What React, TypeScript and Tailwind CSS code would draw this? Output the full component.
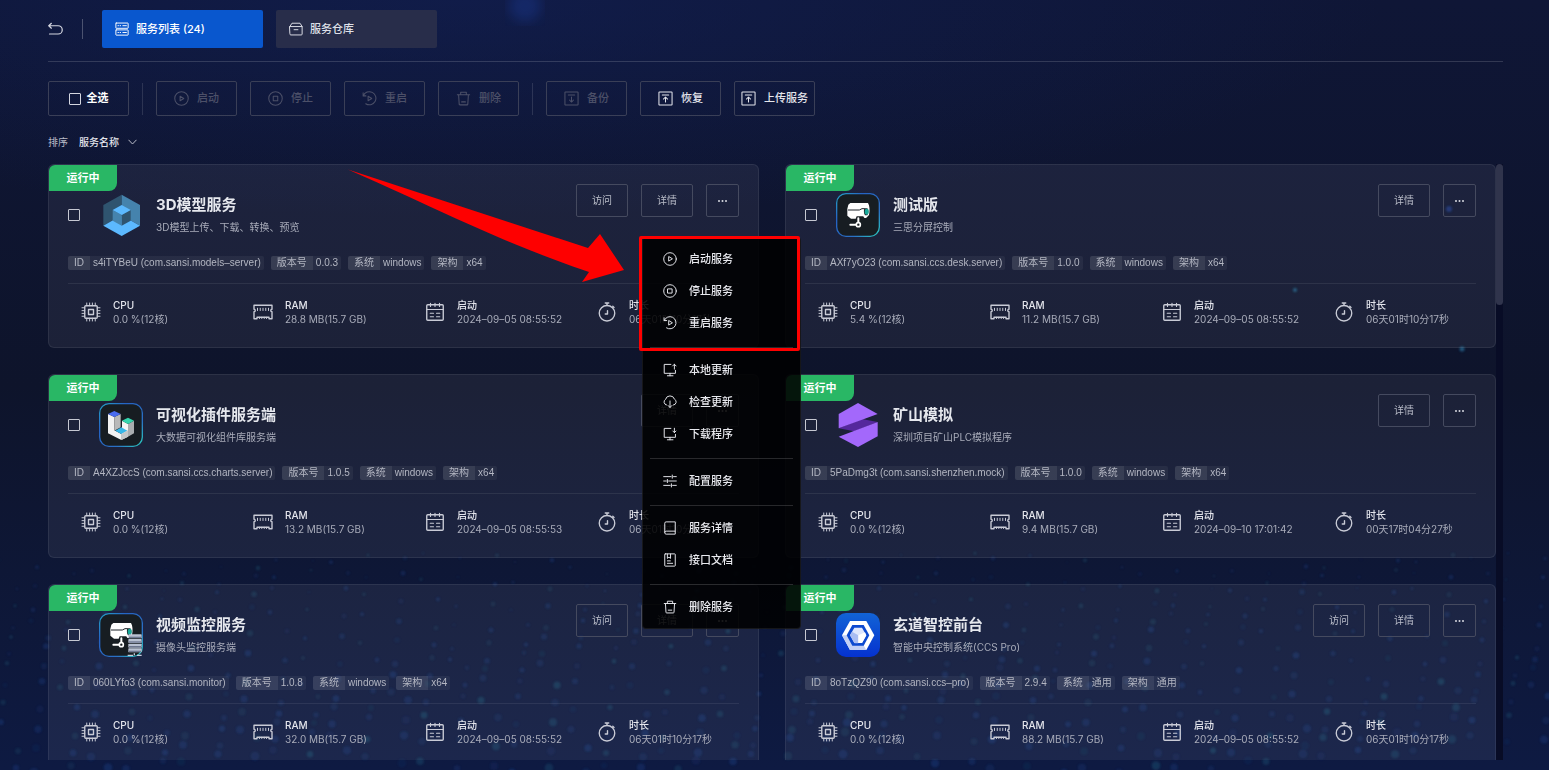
import React from 'react';

type IconProps = { className?: string; children: React.ReactNode };

const Icon = ({ className = 'size-[15px]', children }: IconProps) => (
  <svg
    viewBox="0 0 16 16"
    fill="none"
    stroke="currentColor"
    strokeWidth="1.1"
    strokeLinecap="round"
    strokeLinejoin="round"
    className={`shrink-0 ${className}`}
    aria-hidden="true"
  >
    {children}
  </svg>
);

const icons = {
  back: <path d="M3.6 1.4.8 4l2.8 2.6M.8 4h10a4.4 4.4 0 0 1 0 8.800H1.600" strokeWidth="1.3" />,
  list: (
    <>
      <rect x="1" y="1.2" width="14" height="6" rx=".4" />
      <rect x="1" y="9" width="14" height="6" rx=".4" />
      <path d="M3.4 4.2h.6M5.8 4.2h.6M9 4.2h4M3.4 12h.6M5.8 12h.6M9 12h4" />
    </>
  ),
  store: <path d="M1 5.2h14v8.6a1 1 0 0 1-1 1H2a1 1 0 0 1-1-1zM1 5.2 3.4 1.4h9.2L15 5.2M5.8 8.8h4.4" />,
  play: (
    <>
      <circle cx="8" cy="8" r="7.2" />
      <path d="M6.5 5.6v4.8L10.4 8z" />
    </>
  ),
  stop: (
    <>
      <circle cx="8" cy="8" r="7.2" />
      <rect x="5.6" y="5.6" width="4.8" height="4.8" />
    </>
  ),
  restart: <path d="M1.2 2v3.2h3M1.4 5A7 7 0 1 1 4 13.6M6.5 5.6v4.8L10.4 8z" />,
  trash: (
    <path d="M1.4 4h13.2M5 4V1.4h6V4M2.8 4.2 3.4 14a.8.8 0 0 0 .8.8h7.6a.8.8 0 0 0 .8-.8l.6-9.8M6 11.6h4" />
  ),
  down: (
    <>
      <rect x="1" y="1" width="14" height="14" rx=".6" />
      <path d="M4.6 4.2h6.8M8 6.4v5.4M5.8 9.6 8 11.8l2.2-2.2" />
    </>
  ),
  up: (
    <>
      <rect x="1" y="1" width="14" height="14" rx=".6" />
      <path d="M4.6 4.2h6.8M8 11.8V6.6M5.8 8.6 8 6.4l2.2 2.2" />
    </>
  ),
  localUpdate: <path d="M9 1.6H1.4v10.2h12.8V8.4M5 14.6h6.4M8 11.8v2.8M13 7V1.4M11 3.4l2-2 2 2" />,
  cloud: <path d="M4 11.4A3.5 3.5 0 0 1 2.900 5a5.300 5.300 0 0 1 10.200-.2 3.500 3.500 0 0 1-1.100 6.600M8 6.8v7.4M5.8 12 8 14.2l2.2-2.2" />,
  download: <path d="M9 1.6H1.4v10.2h12.8V8.4M5 14.6h6.4M8 11.8v2.8M13 1.4v5M11.2 4.6 13 6.4l1.8-1.8" />,
  sliders: <path d="M.8 3h8.4M12 3h3.2M10.6 1.2v3.6M.8 8h3M6.4 8h8.8M5 6.2v3.6M.8 13h7.4M11 13h4.2M9.6 11.2v3.6" />,
  book: <path d="M14 11.6V1H3.6A1.6 1.6 0 0 0 2 2.6v10.8A1.6 1.6 0 0 0 3.6 15H14v-3.4H3.6A1.6 1.6 0 0 0 2 13" />,
  doc: (
    <>
      <rect x="2" y="1" width="12" height="14" rx=".6" />
      <path d="M5 1.2v5l1.8-1.4L8.6 6.2v-5M5 9h3.4M5 11.8h6" />
    </>
  ),
  cpu: (
    <>
      <rect x="3" y="3" width="10" height="10" rx=".8" />
      <rect x="6" y="6" width="4" height="4" />
      <path d="M4.6 3V.8M6.9 3V.8M9.1 3V.8M11.4 3V.8M4.6 15.2V13M6.9 15.2V13M9.1 15.2V13M11.4 15.2V13M3 4.6H.8M3 6.9H.8M3 9.1H.8M3 11.4H.8M15.2 4.6H13M15.2 6.9H13M15.2 9.1H13M15.2 11.4H13" strokeWidth=".8" />
    </>
  ),
  ram: (
    <>
      <path d="M.8 2.6h14.4v3.2a1 1 0 0 0 0 2v5.6h-2.4v-1.2H3.2v1.2H.8V7.8a1 1 0 0 0 0-2z" />
      <path d="M3.6 5v1.8M5.8 5v1.8M8 5v1.8M10.2 5v1.8M12.4 5v1.8M5.2 12.2v1M7 12.2v1M9 12.2v1M10.8 12.2v1" strokeWidth=".8" />
    </>
  ),
  calendar: (
    <>
      <rect x="1.4" y="2.2" width="13.2" height="12.4" rx=".8" />
      <path d="M1.4 6h13.2M4.4 1v2.6M8 1v2.6M11.6 1v2.6M4.2 9h2.6M9.2 9h2.6M4.2 11.8h2.6M9.2 11.8h2.6" strokeWidth=".9" />
    </>
  ),
  timer: (
    <>
      <circle cx="8" cy="9" r="6.200" />
      <path d="M6.6.8h2.8M8 .8v2M12.600 3.400l1 1M8.4 7v2.6H6.6" />
    </>
  ),
};

const CubeLogo = () => (
  <svg viewBox="0 0 132 132" className="size-11 shrink-0" aria-hidden="true">
    <path d="M68 5 13 36v62l55-31z" fill="#2f546f" />
    <path d="m68 5 55 31v62L68 67z" fill="#4583ad" />
    <path d="m13 98 55-31 55 31-55 31z" fill="#5cb9ff" />
    <path d="m41 51 27 15v32L41 83z" fill="#4583ad" />
    <path d="M95 51 68 66v32l27-15z" fill="#2f546f" />
    <path d="m68 36 27 15-27 15-27-15z" fill="#5cb9ff" />
  </svg>
);

const AppFrame = ({ id }: { id: string }) => (
  <>
    <defs>
      <linearGradient id={id} x1="0" y1="0" x2="1" y2="1">
        <stop offset="0" stopColor="#25a5c8" />
        <stop offset=".3" stopColor="#2563c4" />
        <stop offset=".7" stopColor="#2a70c4" />
        <stop offset="1" stopColor="#2bd0c0" />
      </linearGradient>
    </defs>
    <rect x="2" y="2" width="128" height="128" rx="28" fill="#171d22" stroke={`url(#${id})`} strokeWidth="4" />
  </>
);

const CameraLogo = ({ id, server = false }: { id: string; server?: boolean }) => (
  <svg viewBox="0 0 132 132" className="size-11 shrink-0" aria-hidden="true">
    <AppFrame id={id} />
    <path d="M43 30h53c5 8 6 22 3 36l-8 8c-4 2-7 2-9-4H62l-3 7H45L34 68V47l3-12z" fill="#fff" />
    <path d="M36 51h34l8-4h8" fill="none" stroke="#1c2328" strokeWidth="3" />
    <path d="M85 46h9c5 6 4 14 0 21h-7c-4-6-4-14-2-21z" fill="#1c2328" />
    <ellipse cx="92" cy="56" rx="6" ry="9" fill="#17a99a" />
    <path d="M67 76v14M43 95h18" stroke="#fff" strokeWidth="6" strokeLinecap="round" />
    <circle cx="67" cy="95" r="6" fill="#171d22" stroke="#fff" strokeWidth="5" />
    {server && (
      <>
        {[64, 78, 92, 106].map((y) => (
          <g key={y}>
            <rect x="88" y={y} width="40" height="12" rx="2" fill="#b9c1d2" />
            <path d={`M90 ${y + 9}h36`} stroke="#6d7790" strokeWidth="4" />
          </g>
        ))}
        <path d="M86 127h16m4-6v6m8 0h14" stroke="#c7cedb" strokeWidth="4" />
      </>
    )}
  </svg>
);

const ChartLogo = () => (
  <svg viewBox="0 0 132 132" className="size-11 shrink-0" aria-hidden="true">
    <AppFrame id="chart-frame" />
    <path d="m27 33 19 9v40l21 11v18L27 91z" fill="#f2f2f2" />
    <path d="m46 42 19-9v40l-19 10z" fill="#b9b9b9" />
    <path d="m69 53 18 10v38L67 111V93l2-20z" fill="#f4f4f4" />
    <path d="m87 63 18-10v38l-18 10z" fill="#a9adb0" />
    <path d="m27 33 19-9 19 9-19 9z" fill="#4a6cf0" />
    <path d="m69 53 18-9 18 9-18 10z" fill="#34d6ae" />
    <path d="m49 83 18-10 18 10-18 10z" fill="#37b6e8" />
    <path d="m67 93 20-11v19l-20 10z" fill="#c4c6c8" />
  </svg>
);

const MineLogo = () => (
  <svg viewBox="0 0 132 132" className="size-11 shrink-0" aria-hidden="true">
    <path d="m8 76 70-28 47 9-70 28z" fill="#55289c" />
    <path d="m66 0 59 33L8 76V33z" fill="#a368fb" />
    <path d="M125 57v43l-59 32-58-31z" fill="#a368fb" />
  </svg>
);

const ConsoleLogo = () => (
  <svg viewBox="0 0 132 132" className="size-11 shrink-0" aria-hidden="true">
    <defs>
      <linearGradient id="console-bg" x1="0" y1="0" x2="0" y2="1">
        <stop offset="0" stopColor="#1263d6" />
        <stop offset="1" stopColor="#0532cf" />
      </linearGradient>
    </defs>
    <rect width="132" height="132" rx="30" fill="url(#console-bg)" />
    <path d="m18 67 24-43h49l24 43-24 44H42z" fill="#fff" />
    <path d="M18 67h18l15 27 31 1 9 16H42z" fill="#c2cff5" />
    <path d="m32 67 17-31h34l17 31-17 31H49z" fill="#0c49d0" />
    <path d="m42 67 13-23h23l13 23-13 23H55z" fill="#dfe7fd" />
    <path d="m48 56 19 11v24H56L42 67z" fill="#a9bdf3" />
    <path d="m67 67 20-9 4 9-13 23H67z" fill="#fff" />
  </svg>
);

type Service = {
  name: string;
  desc: string;
  id: string;
  version: string;
  os: string;
  arch: string;
  cpu: string;
  ram: string;
  start: string;
  uptime: string;
  visit?: boolean;
  menu?: boolean;
  logo: React.ReactNode;
};

const services: Service[] = [
  {
    name: '3D模型服务',
    desc: '3D模型上传、下载、转换、预览',
    id: 's4iTYBeU (com.sansi.models–server)',
    version: '0.0.3',
    os: 'windows',
    arch: 'x64',
    cpu: '0.0 %(12核)',
    ram: '28.8 MB(15.7 GB)',
    start: '2024–09–05 08:55:52',
    uptime: '06天01时10分17秒',
    visit: true,
    menu: true,
    logo: <CubeLogo />,
  },
  {
    name: '测试版',
    desc: '三思分屏控制',
    id: 'AXf7yO23 (com.sansi.ccs.desk.server)',
    version: '1.0.0',
    os: 'windows',
    arch: 'x64',
    cpu: '5.4 %(12核)',
    ram: '11.2 MB(15.7 GB)',
    start: '2024–09–05 08:55:52',
    uptime: '06天01时10分17秒',
    logo: <CameraLogo id="desk-frame" />,
  },
  {
    name: '可视化插件服务端',
    desc: '大数据可视化组件库服务端',
    id: 'A4XZJccS (com.sansi.ccs.charts.server)',
    version: '1.0.5',
    os: 'windows',
    arch: 'x64',
    cpu: '0.0 %(12核)',
    ram: '13.2 MB(15.7 GB)',
    start: '2024–09–05 08:55:53',
    uptime: '06天01时10分17秒',
    logo: <ChartLogo />,
  },
  {
    name: '矿山模拟',
    desc: '深圳项目矿山PLC模拟程序',
    id: '5PaDmg3t (com.sansi.shenzhen.mock)',
    version: '1.0.0',
    os: 'windows',
    arch: 'x64',
    cpu: '0.0 %(12核)',
    ram: '9.4 MB(15.7 GB)',
    start: '2024–09–10 17:01:42',
    uptime: '00天17时04分27秒',
    logo: <MineLogo />,
  },
  {
    name: '视频监控服务',
    desc: '摄像头监控服务端',
    id: '060LYfo3 (com.sansi.monitor)',
    version: '1.0.8',
    os: 'windows',
    arch: 'x64',
    cpu: '0.0 %(12核)',
    ram: '32.0 MB(15.7 GB)',
    start: '2024–09–05 08:55:52',
    uptime: '06天01时10分17秒',
    visit: true,
    logo: <CameraLogo id="monitor-frame" server />,
  },
  {
    name: '玄道智控前台',
    desc: '智能中央控制系统(CCS Pro)',
    id: '8oTzQZ90 (com.sansi.ccs–pro)',
    version: '2.9.4',
    os: '通用',
    arch: '通用',
    cpu: '0.0 %(12核)',
    ram: '88.2 MB(15.7 GB)',
    start: '2024–09–05 08:55:52',
    uptime: '06天01时10分17秒',
    visit: true,
    logo: <ConsoleLogo />,
  },
];

const menuGroups = [
  [
    { icon: icons.play, label: '启动服务' },
    { icon: icons.stop, label: '停止服务' },
    { icon: icons.restart, label: '重启服务' },
  ],
  [
    { icon: icons.localUpdate, label: '本地更新' },
    { icon: icons.cloud, label: '检查更新' },
    { icon: icons.download, label: '下载程序' },
  ],
  [{ icon: icons.sliders, label: '配置服务' }],
  [
    { icon: icons.book, label: '服务详情' },
    { icon: icons.doc, label: '接口文档' },
  ],
  [{ icon: icons.trash, label: '删除服务' }],
];

const Tag = ({ label, value }: { label: string; value: string }) => (
  <div className="flex h-[14px] overflow-hidden rounded-xs bg-white/5 font-['Liberation_Sans','Noto_Sans_CJK_SC',sans-serif] text-[10px] leading-[14px] text-[#b3b6c2]">
    <span className="bg-white/8 px-[6px]">{label}</span>
    <span className="px-[3px]">{value}</span>
  </div>
);

const Stat = ({ icon, label, value }: { icon: React.ReactNode; label: string; value: string }) => (
  <div className="flex items-center gap-3 pl-[11px]">
    <Icon className="size-5 text-[#c9cbd6]">{icon}</Icon>
    <div className="text-[10px] leading-[14px] whitespace-nowrap">
      <div className="font-medium text-[#e4e5ec]">{label}</div>
      <div className="text-[#a9acba]">{value}</div>
    </div>
  </div>
);

const cardButton = 'h-[33px] rounded-xs border border-[#454a5f] text-[10px] text-[#b9bcc8]';

const ServiceMenu = () => (
  <div className="absolute top-[53px] right-[-62px] z-20 w-[159px] rounded-sm border border-white/8 bg-black/88 py-[5px]">
    {menuGroups.map((group, i) => (
      <div key={i}>
        {i > 0 && <div className="mx-[7px] mt-2 mb-[6px] h-px bg-white/15" />}
        {group.map((item) => (
          <button key={item.label} type="button" className="flex h-8 w-full items-center gap-3 pl-5 text-[11px] font-medium text-[#e8e9ee]">
            <Icon className="size-[14px]">{item.icon}</Icon>
            {item.label}
          </button>
        ))}
      </div>
    ))}
    {/* callout */}
    <div className="pointer-events-none absolute -top-[2px] -left-[4px] h-[115px] w-[161px] rounded-xs border-3 border-[#fe0000]" />
    <svg viewBox="0 0 277 114" className="pointer-events-none absolute top-[-69px] right-full mr-[18px] h-[114px] w-[277px] max-w-none" aria-hidden="true">
      <path d="M0 .5 240 79 252 65 276 101 234 113 241 103C150 72 90 40 0 .5z" fill="#fe0000" />
    </svg>
  </div>
);

const ServiceCard = ({ service }: { service: Service }) => (
  <article className="relative rounded-md border border-white/7 bg-white/6 px-[19px] pt-7 pb-[21px]">
    <span className="absolute top-0 left-0 flex h-[26px] w-[68px] items-center justify-center rounded-tl-md rounded-br-lg bg-[#29b765] text-[11px] font-bold text-white">
      运行中
    </span>
    <div className="flex h-11 items-center">
      <input type="checkbox" aria-label={service.name} className="mr-[19px] size-3 shrink-0 appearance-none rounded-[1px] border border-[#c6c8d2]" />
      {service.logo}
      <div className="ml-[13px] min-w-0 flex-1 pt-[2px]">
        <h2 className="text-[15px] leading-[22px] font-bold text-[#e6e8ee]">{service.name}</h2>
        <p className="text-[10px] leading-[22px] text-[#a9acba]">{service.desc}</p>
      </div>
      <div className="-mt-[9px] flex gap-[13px] self-start">
        {service.visit && <button type="button" className={`w-[52px] ${cardButton}`}>访问</button>}
        <button type="button" className={`w-[52px] ${cardButton}`}>详情</button>
        <div className="relative">
          <button type="button" aria-label="更多" className={`flex w-[33px] items-center justify-center ${cardButton}`}>
            <svg viewBox="0 0 9 2" className="h-[2px] w-[9px] fill-[#d8dae2]" aria-hidden="true">
              <circle cx="1" cy="1" r="1" />
              <circle cx="4.5" cy="1" r="1" />
              <circle cx="8" cy="1" r="1" />
            </svg>
          </button>
          {service.menu && <ServiceMenu />}
        </div>
      </div>
    </div>
    <div className="mt-[19px] flex gap-[7px]">
      <Tag label="ID" value={service.id} />
      <Tag label="版本号" value={service.version} />
      <Tag label="系统" value={service.os} />
      <Tag label="架构" value={service.arch} />
    </div>
    <div className="mt-[13px] border-t border-white/8" />
    <div className="mt-[14px] -mr-[19px] ml-[2px] grid grid-cols-4">
      <Stat icon={icons.cpu} label="CPU" value={service.cpu} />
      <Stat icon={icons.ram} label="RAM" value={service.ram} />
      <Stat icon={icons.calendar} label="启动" value={service.start} />
      <Stat icon={icons.timer} label="时长" value={service.uptime} />
    </div>
  </article>
);

const ToolButton = ({ icon, label, disabled }: { icon: React.ReactNode; label: string; disabled?: boolean }) => (
  <button
    type="button"
    disabled={disabled}
    className="flex h-[35px] w-[81px] items-center justify-center gap-2 rounded-xs border border-[#3a3f57] text-[11px] font-medium text-[#e4e5ec] disabled:text-[#4c5068]"
  >
    <Icon>{icon}</Icon>
    {label}
  </button>
);

// rows of soft dots that get denser and larger towards the bottom
const dots = Array.from({ length: 620 }, (_, i) => {
  const row = Math.floor(i / 52);
  const col = i % 52;
  const wave = Math.sin(col * 0.35 + row * 0.7) * 9;
  return {
    x: col * 30 + ((row * 17 + col * 7) % 19),
    y: 560 + row * 18 + wave + ((col * 13 + row * 5) % 9),
    r: 1 + ((col * 3 + row * 5) % 5) * 0.3 + row * 0.2,
    o: 0.08 + ((col * 5 + row * 3) % 7) * 0.025,
    teal: (col + row * 2) % 4 === 0,
  };
});

const Backdrop = () => (
  <svg viewBox="0 0 1549 770" preserveAspectRatio="xMidYMax slice" className="absolute inset-0 size-full" aria-hidden="true">
    <defs>
      <filter id="soft"><feGaussianBlur stdDeviation=".9" /></filter>
      <filter id="glow"><feGaussianBlur stdDeviation="6" /></filter>
    </defs>
    <circle cx="525" cy="6" r="16" fill="#1c3fa0" opacity=".35" filter="url(#glow)" />
    <g filter="url(#soft)">
      {dots.map((d, i) => (
        <circle key={i} cx={d.x} cy={d.y} r={d.r} fill={d.teal ? '#2c8ba6' : '#2459b5'} opacity={d.o} />
      ))}
      <circle cx="1295" cy="290" r="2" fill="#2b7fae" opacity=".6" />
      <circle cx="1462" cy="349" r="2.5" fill="#2b7fae" opacity=".6" />
      <circle cx="1449" cy="209" r="3" fill="#2445b0" opacity=".5" />
    </g>
  </svg>
);

const App: React.FC = () => {
  return (
    <div className="relative flex h-screen flex-col overflow-hidden bg-[#0e142b] bg-linear-to-b from-[#0f1636] via-[#0e142b] to-[#0e1a42] pt-[10px] pr-[46px] pb-[10px] pl-12 font-['Inter','Noto_Sans_CJK_SC',sans-serif] text-white">
      <div className="absolute inset-x-0 top-0 h-64 bg-radial-[at_30%_0%] from-[#12225c]/50 to-transparent to-60%" />
      <Backdrop />
      <header className="relative flex items-center border-b border-white/15 pb-[13px]">
        <button type="button" aria-label="返回" className="text-[#d4d6e0]">
          <Icon>{icons.back}</Icon>
        </button>
        <div className="mx-[19px] h-5 w-px bg-white/25" />
        <nav className="flex gap-[13px]">
          <button type="button" className="flex h-[38px] w-[161px] items-center gap-[7px] rounded-xs bg-[#0957ce] pl-[13px] text-[11px] font-medium">
            <Icon className="size-[14px]">{icons.list}</Icon>
            服务列表 (24)
          </button>
          <button type="button" className="flex h-[38px] w-[161px] items-center gap-[7px] rounded-xs bg-[#282d4a] pl-[13px] text-[11px] font-medium text-[#dfe0e8]">
            <Icon className="size-[14px]">{icons.store}</Icon>
            服务仓库
          </button>
        </nav>
      </header>

      <div className="relative mt-[19px] flex items-center gap-[13px]">
        <label className="flex h-[35px] w-[81px] items-center justify-center gap-[6px] rounded-xs border border-[#3a3f57] text-[11px] font-bold">
          <input type="checkbox" className="size-3 appearance-none rounded-[1px] border border-[#d4d6e0]" />
          全选
        </label>
        <div className="h-8 w-px bg-white/12" />
        <ToolButton icon={icons.play} label="启动" disabled />
        <ToolButton icon={icons.stop} label="停止" disabled />
        <ToolButton icon={icons.restart} label="重启" disabled />
        <ToolButton icon={icons.trash} label="删除" disabled />
        <div className="h-8 w-px bg-white/12" />
        <ToolButton icon={icons.down} label="备份" disabled />
        <ToolButton icon={icons.up} label="恢复" />
        <ToolButton icon={icons.up} label="上传服务" />
      </div>

      <div className="relative mt-[18px] flex h-4 items-center text-[10px]">
        <label htmlFor="sort" className="mr-[11px] text-[#b9bcc8]">排序</label>
        <select id="sort" className="w-[58px] appearance-none bg-transparent font-medium text-[#e4e5ec]">
          <option>服务名称</option>
        </select>
        <svg viewBox="0 0 9 6" className="pointer-events-none -ml-[9px] h-[6px] w-[9px]" fill="none" stroke="#b9bcc8" aria-hidden="true">
          <path d="M.5.8 4.5 5 8.5.8" />
        </svg>
      </div>

      <main className="relative mt-[14px] flex min-h-0 flex-1 overflow-hidden">
        <div className="grid flex-1 grid-cols-2 content-start gap-[26px]">
          {services.map((service) => (
            <ServiceCard key={service.name} service={service} />
          ))}
        </div>
        <div className="w-[7px] bg-[#080c26]">
          <div className="h-[141px] rounded-full bg-[#30344c]" />
        </div>
      </main>
    </div>
  );
};

export default App;
